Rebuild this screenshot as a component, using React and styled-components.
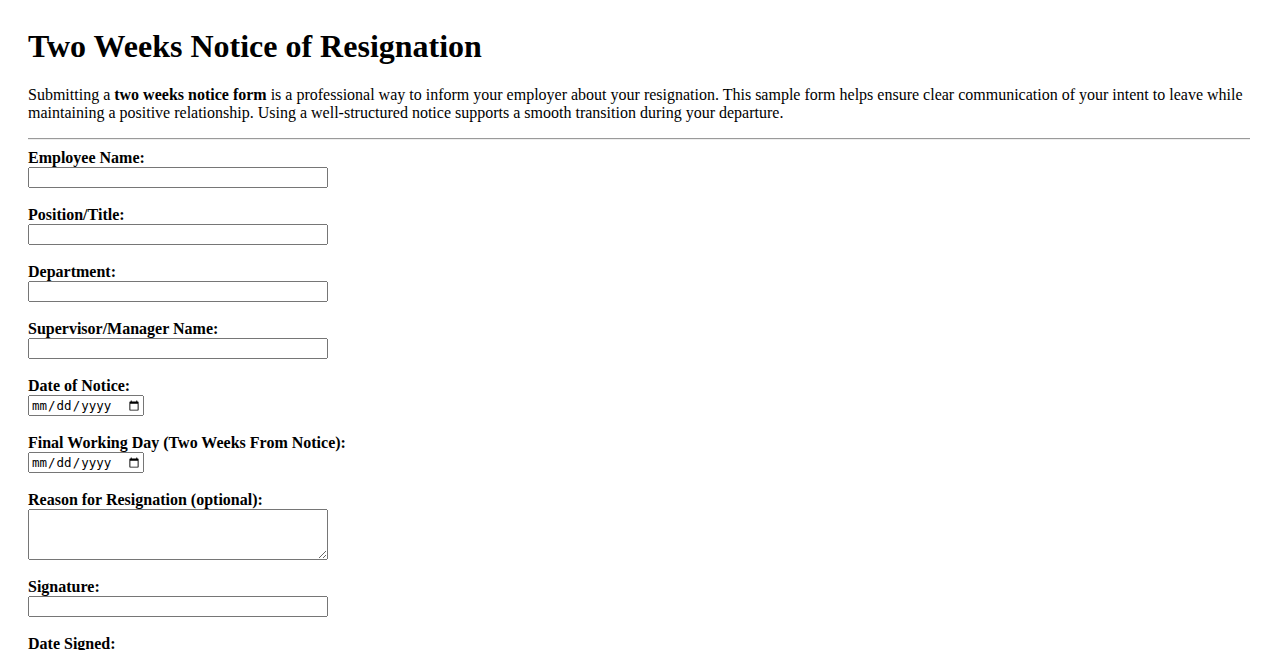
import React from "react";
import styled, { createGlobalStyle } from "styled-components";

let GlobalStyle = createGlobalStyle`
  body {
    margin: 8px;
    padding: 20px;
    font-family: "Liberation Serif", "Times New Roman", serif;
    font-size: 16px;
    color: #000;
    background: #fff;
  }
`

let Title = styled.h1`
  font-size: 32px;
  font-weight: bold;
  margin: 0 0 21.44px 0;
`

let Intro = styled.p`
  margin: 0 0 16px 0;
`

let Divider = styled.hr`
  margin: 0 0 9px 0;
  border: none;
  border-top: 1px solid #9a9a9a;
  border-bottom: 1px solid #eee;
`

let Field = styled.div`
  margin-bottom: 18px;
`

let Label = styled.label`
  display: block;
  font-weight: bold;
`

let TextInput = styled.input`
  display: block;
  box-sizing: border-box;
  width: 300px;
  height: 21px;
  margin: 0;
`

let DateInput = styled.input`
  display: block;
  box-sizing: border-box;
  width: 116px;
  height: 21px;
  margin: 0;
  font-size: 12.5px;
`

let TextArea = styled.textarea`
  display: block;
  box-sizing: border-box;
  width: 300px;
  height: 51px;
  margin: 0;
`

let SubmitBtn = styled.button`
  font-size: 13.33px;
`

let fields = [
  { id: "name", label: "Employee Name:", type: "text" },
  { id: "position", label: "Position/Title:", type: "text" },
  { id: "department", label: "Department:", type: "text" },
  { id: "manager", label: "Supervisor/Manager Name:", type: "text" },
  { id: "noticeDate", label: "Date of Notice:", type: "date" },
  { id: "lastDay", label: "Final Working Day (Two Weeks From Notice):", type: "date" },
  { id: "reason", label: "Reason for Resignation (optional):", type: "area" },
  { id: "signature", label: "Signature:", type: "text" },
  { id: "signedDate", label: "Date Signed:", type: "date" },
]

function FormField({ field }) {
  return (
    <Field>
      <Label htmlFor={field.id}>{field.label}</Label>
      {
        field.type === "area"
          ? <TextArea id={field.id} />
          : field.type === "date"
            ? <DateInput id={field.id} type="date" />
            : <TextInput id={field.id} type="text" />
      }
    </Field>
  )
}

export default function App() {
  return (
    <>
      <GlobalStyle />
      <Title>Two Weeks Notice of Resignation</Title>
      <Intro>
        Submitting a <strong>two weeks notice form</strong> is a professional way to inform your employer about your resignation. This sample form helps ensure clear communication of your intent to leave while maintaining a positive relationship. Using a well-structured notice supports a smooth transition during your departure.
      </Intro>
      <Divider />
      <form onSubmit={(e) => e.preventDefault()}>
        {fields.map((f) => <FormField key={f.id} field={f} />)}
        <SubmitBtn type="submit">Submit Notice</SubmitBtn>
      </form>
    </>
  )
}
